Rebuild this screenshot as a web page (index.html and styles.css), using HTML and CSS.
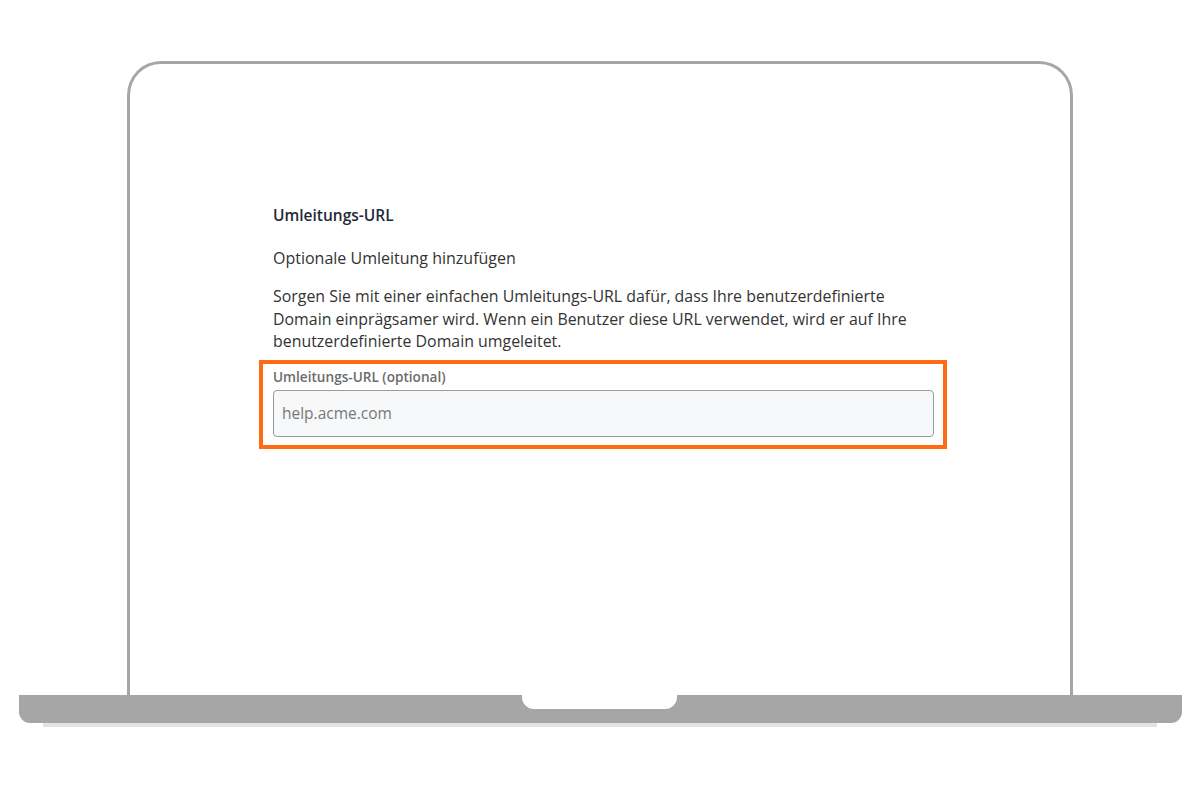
FILE: index.html
```html
<!DOCTYPE html>
<html lang="de">
<head>
<meta charset="utf-8">
<title>Umleitungs-URL</title>
<link rel="stylesheet" href="styles.css">
</head>
<body>
<div class="stage">
  <div class="laptop">
    <div class="screen">
      <div class="content">
        <h2 class="title">Umleitungs-URL</h2>
        <p class="subtitle">Optionale Umleitung hinzufügen</p>
        <p class="desc">Sorgen Sie mit einer einfachen Umleitungs-URL dafür, dass Ihre benutzerdefinierte Domain einprägsamer wird. Wenn ein Benutzer diese URL verwendet, wird er auf Ihre benutzerdefinierte Domain umgeleitet.</p>
        <div class="highlight">
          <label class="field-label" for="redir">Umleitungs-URL (optional)</label>
          <input class="field-input" id="redir" type="text" placeholder="help.acme.com">
        </div>
      </div>
    </div>
    <div class="base">
      <div class="notch"></div>
    </div>
    <div class="base-shadow"></div>
  </div>
</div>
</body>
</html>
```
FILE: styles.css
```css
* { box-sizing: border-box; }
html, body {
  margin: 0;
  padding: 0;
  background: #ffffff;
  font-family: "Open Sans", "Noto Sans", Arial, sans-serif;
}
.stage {
  width: 1200px;
  height: 790px;
  padding-top: 61px;
}
.laptop {
  display: flex;
  flex-direction: column;
  align-items: center;
}
.screen {
  width: 946px;
  height: 634px;
  border: 3px solid #a6a6a6;
  border-bottom: none;
  border-radius: 34px 34px 0 0;
  background: #ffffff;
  padding: 140px 0 0 143px;
}
.content {
  width: 661px;
}
.title {
  margin: 0;
  font-size: 15.5px;
  font-weight: 600;
  line-height: 22px;
  color: #1f2a37;
}
.subtitle {
  margin: 21px 0 0;
  font-size: 16px;
  line-height: 22px;
  color: #333333;
}
.desc {
  margin: 16px 0 0;
  font-size: 15.9px;
  line-height: 22.5px;
  color: #333333;
}
.highlight {
  margin: 7px -13px 0 -14px;
  border: 4px solid #ff6a13;
  padding: 5px 9px 8px 10px;
  display: flex;
  flex-direction: column;
}
.field-label {
  font-size: 13.6px;
  font-weight: 600;
  line-height: 16px;
  color: #6b6b6b;
  margin-bottom: 5px;
}
.field-input {
  width: 100%;
  height: 47px;
  border: 1px solid #9a9a9a;
  border-radius: 4px;
  background: #f7f8f9;
  padding: 0 8px;
  font-family: "Open Sans", "Noto Sans", Arial, sans-serif;
  font-size: 15.5px;
  color: #333;
  outline: none;
}
.field-input::placeholder {
  color: #777777;
}
.base {
  width: 1163px;
  height: 28px;
  background: #a6a6a6;
  border-radius: 0 0 11px 11px;
  display: flex;
  justify-content: center;
}
.notch {
  width: 155px;
  height: 14px;
  background: #ffffff;
  border-radius: 0 0 12px 12px;
  margin-left: -2px;
}
.base-shadow {
  width: 1114px;
  height: 4px;
  background: #e3e3e3;
}
```
